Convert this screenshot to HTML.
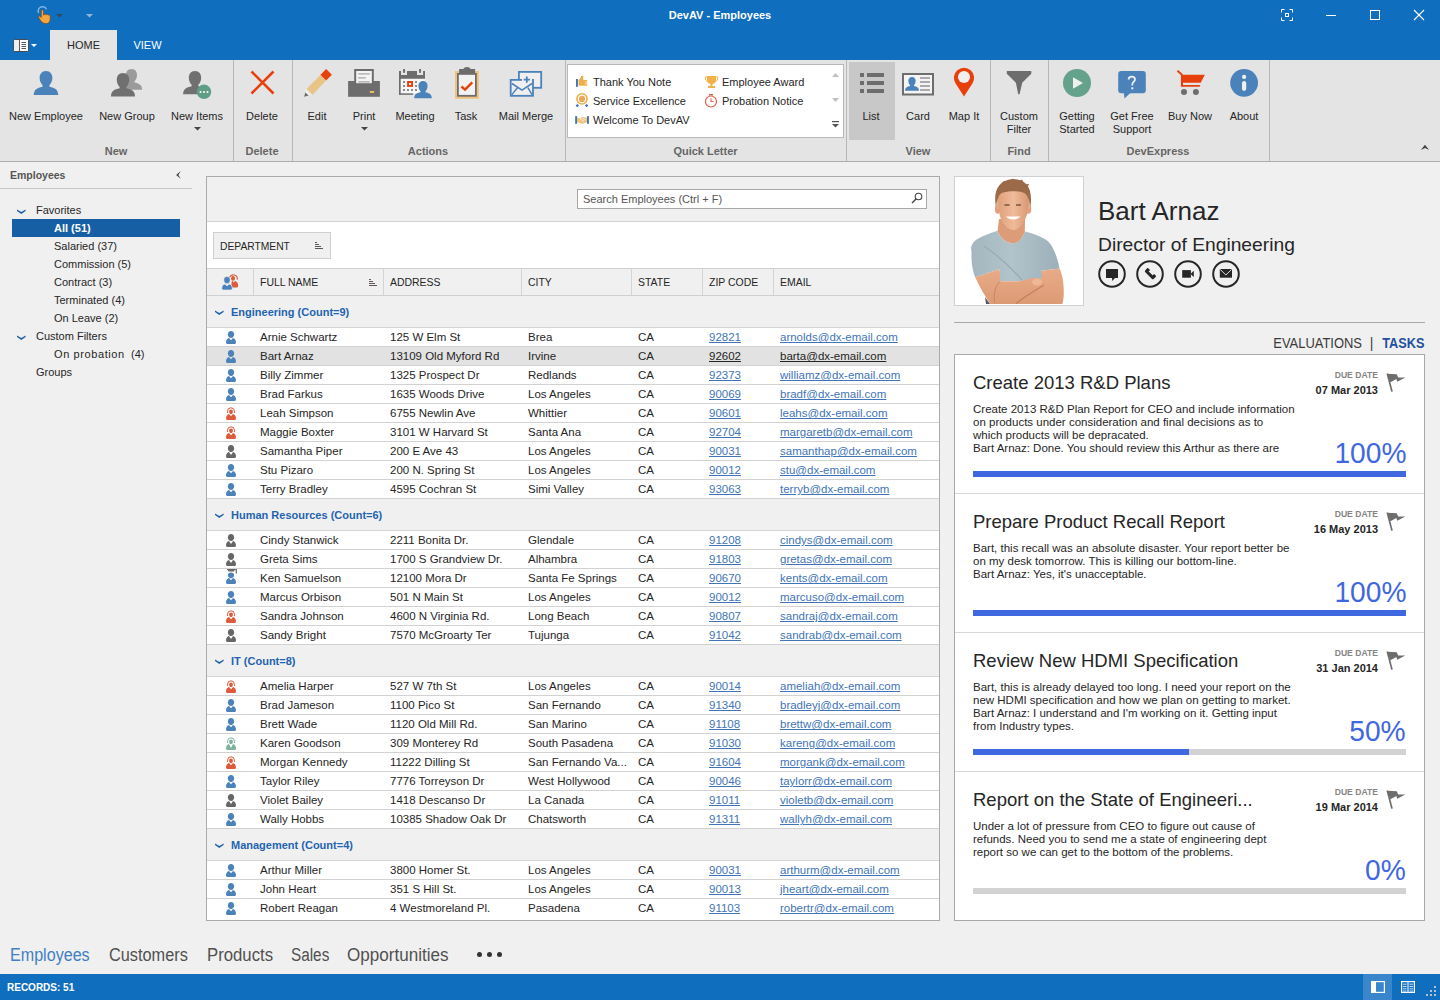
<!DOCTYPE html>
<html><head><meta charset="utf-8">
<style>
*{margin:0;padding:0;box-sizing:border-box}
html,body{width:1440px;height:1000px;overflow:hidden}
body{position:relative;background:#f0f0f0;font-family:"Liberation Sans",sans-serif;color:#252525}
.a{position:absolute}
.t{position:absolute;white-space:nowrap}
svg{overflow:visible}
u{text-decoration:underline}
</style></head><body>

<div class="a" style="left:0px;top:0px;width:1440px;height:60px;background:#106ebe;"></div>
<svg class="a" style="left:36px;top:6px;" width="16" height="18" viewBox="0 0 16 18"><path d="M2.6 7 A4.3 4.3 0 0 1 10.5 3.2" fill="none" stroke="#86b6e6" stroke-width="1.4"/><path d="M5.3 4.8 C5.3 3.6 7.5 3.6 7.5 4.8 L7.5 9.2 L8.3 8.6 C8.9 8.1 9.9 8.2 10.3 8.9 C10.9 8.3 12 8.4 12.4 9.2 C12.9 8.8 14.2 9 14.2 9.9 L14.2 13.2 C14.2 16 12.4 17.6 9.9 17.6 C7.6 17.6 6.1 16.6 4.7 14.6 L2.6 11.6 C2.1 10.6 3.1 9.7 4.1 10.4 L5.3 11.5 Z" fill="#f3a53f" stroke="#7e4b12" stroke-width="0.7"/></svg>
<svg class="a" style="left:56px;top:14px;" width="8" height="5" viewBox="0 0 8 5"><path d="M0 0 L7 0 L3.5 3.5 Z" fill="#2d4d5e"/></svg>
<svg class="a" style="left:86px;top:14px;" width="8" height="5" viewBox="0 0 8 5"><path d="M0 0 L7 0 L3.5 3.5 Z" fill="#8db6df"/></svg>
<div class="t" style="top:8.86px;font-size:11px;color:#fff;line-height:12.65px;font-weight:bold;left:420px;width:600px;text-align:center;">DevAV - Employees</div>
<svg class="a" style="left:1281px;top:9px;" width="12" height="12" viewBox="0 0 12 12"><path d="M0.5 3.5 V0.5 H3.5 M8.5 0.5 H11.5 V3.5 M11.5 8.5 V11.5 H8.5 M3.5 11.5 H0.5 V8.5" fill="none" stroke="#fff" stroke-width="1"/><rect x="4.5" y="4.5" width="3" height="3" fill="none" stroke="#fff" stroke-width="1"/></svg>
<div class="a" style="left:1326px;top:15px;width:10px;height:1px;background:#fff;"></div>
<svg class="a" style="left:1370px;top:10px;" width="10" height="10" viewBox="0 0 10 10"><rect x="0.5" y="0.5" width="9" height="9" fill="none" stroke="#fff" stroke-width="1"/></svg>
<svg class="a" style="left:1414px;top:10px;" width="10" height="10" viewBox="0 0 10 10"><path d="M0 0 L10 10 M10 0 L0 10" stroke="#fff" stroke-width="1.1"/></svg>
<svg class="a" style="left:13px;top:39px;" width="16" height="13" viewBox="0 0 16 13"><rect x="0.5" y="0.5" width="15" height="12" rx="1" fill="#fff" stroke="#333" stroke-width="0.8"/><rect x="1" y="1" width="5" height="11" fill="#eee"/><path d="M6.5 1 V12" stroke="#333" stroke-width="0.8"/><path d="M8.5 3.5 H13 M8.5 5.5 H13 M8.5 7.5 H13 M8.5 9.5 H13" stroke="#444" stroke-width="0.9"/></svg>
<svg class="a" style="left:31px;top:44px;" width="6" height="4" viewBox="0 0 6 4"><path d="M0 0 L6 0 L3 3 Z" fill="#fff"/></svg>
<div class="a" style="left:50px;top:30px;width:67px;height:30px;background:#e4e4e4;"></div>
<div class="t" style="top:38.86px;font-size:11px;color:#262626;line-height:12.65px;left:-216.5px;width:600px;text-align:center;">HOME</div>
<div class="t" style="top:38.86px;font-size:11px;color:#fff;line-height:12.65px;left:-152.5px;width:600px;text-align:center;">VIEW</div>
<div class="a" style="left:0px;top:60px;width:1440px;height:101px;background:#e4e4e4;"></div>
<div class="a" style="left:0px;top:161px;width:1440px;height:1px;background:#acacac;"></div>
<div class="a" style="left:233px;top:60px;width:1px;height:101px;background:#b7b7b7;"></div>
<div class="a" style="left:292px;top:60px;width:1px;height:101px;background:#b7b7b7;"></div>
<div class="a" style="left:565px;top:60px;width:1px;height:101px;background:#b7b7b7;"></div>
<div class="a" style="left:846px;top:60px;width:1px;height:101px;background:#b7b7b7;"></div>
<div class="a" style="left:990px;top:60px;width:1px;height:101px;background:#b7b7b7;"></div>
<div class="a" style="left:1048px;top:60px;width:1px;height:101px;background:#b7b7b7;"></div>
<div class="a" style="left:1269px;top:60px;width:1px;height:101px;background:#b7b7b7;"></div>
<div class="a" style="left:849px;top:62px;width:46px;height:78px;background:#c8c8c8;"></div>
<div class="t" style="top:109.86px;font-size:11px;color:#262626;line-height:12.65px;left:-254px;width:600px;text-align:center;">New Employee</div>
<div class="t" style="top:109.86px;font-size:11px;color:#262626;line-height:12.65px;left:-173px;width:600px;text-align:center;">New Group</div>
<div class="t" style="top:109.86px;font-size:11px;color:#262626;line-height:12.65px;left:-103px;width:600px;text-align:center;">New Items</div>
<svg class="a" style="left:194px;top:127px;" width="7" height="4" viewBox="0 0 7 4"><path d="M0 0 L7 0 L3.5 3.5 Z" fill="#444"/></svg>
<div class="t" style="top:109.86px;font-size:11px;color:#262626;line-height:12.65px;left:-38px;width:600px;text-align:center;">Delete</div>
<div class="t" style="top:109.86px;font-size:11px;color:#262626;line-height:12.65px;left:17px;width:600px;text-align:center;">Edit</div>
<div class="t" style="top:109.86px;font-size:11px;color:#262626;line-height:12.65px;left:64px;width:600px;text-align:center;">Print</div>
<svg class="a" style="left:361px;top:127px;" width="7" height="4" viewBox="0 0 7 4"><path d="M0 0 L7 0 L3.5 3.5 Z" fill="#444"/></svg>
<div class="t" style="top:109.86px;font-size:11px;color:#262626;line-height:12.65px;left:115px;width:600px;text-align:center;">Meeting</div>
<div class="t" style="top:109.86px;font-size:11px;color:#262626;line-height:12.65px;left:166px;width:600px;text-align:center;">Task</div>
<div class="t" style="top:109.86px;font-size:11px;color:#262626;line-height:12.65px;left:226px;width:600px;text-align:center;">Mail Merge</div>
<div class="t" style="top:109.86px;font-size:11px;color:#262626;line-height:12.65px;left:571px;width:600px;text-align:center;">List</div>
<div class="t" style="top:109.86px;font-size:11px;color:#262626;line-height:12.65px;left:618px;width:600px;text-align:center;">Card</div>
<div class="t" style="top:109.86px;font-size:11px;color:#262626;line-height:12.65px;left:664px;width:600px;text-align:center;">Map It</div>
<div class="t" style="top:109.86px;font-size:11px;color:#262626;line-height:12.65px;left:719px;width:600px;text-align:center;">Custom</div>
<div class="t" style="top:122.86px;font-size:11px;color:#262626;line-height:12.65px;left:719px;width:600px;text-align:center;">Filter</div>
<div class="t" style="top:109.86px;font-size:11px;color:#262626;line-height:12.65px;left:777px;width:600px;text-align:center;">Getting</div>
<div class="t" style="top:122.86px;font-size:11px;color:#262626;line-height:12.65px;left:777px;width:600px;text-align:center;">Started</div>
<div class="t" style="top:109.86px;font-size:11px;color:#262626;line-height:12.65px;left:832px;width:600px;text-align:center;">Get Free</div>
<div class="t" style="top:122.86px;font-size:11px;color:#262626;line-height:12.65px;left:832px;width:600px;text-align:center;">Support</div>
<div class="t" style="top:109.86px;font-size:11px;color:#262626;line-height:12.65px;left:890px;width:600px;text-align:center;">Buy Now</div>
<div class="t" style="top:109.86px;font-size:11px;color:#262626;line-height:12.65px;left:944px;width:600px;text-align:center;">About</div>
<div class="t" style="top:144.86px;font-size:11px;color:#666666;line-height:12.65px;font-weight:bold;left:-184px;width:600px;text-align:center;">New</div>
<div class="t" style="top:144.86px;font-size:11px;color:#666666;line-height:12.65px;font-weight:bold;left:-38px;width:600px;text-align:center;">Delete</div>
<div class="t" style="top:144.86px;font-size:11px;color:#666666;line-height:12.65px;font-weight:bold;left:128px;width:600px;text-align:center;">Actions</div>
<div class="t" style="top:144.86px;font-size:11px;color:#666666;line-height:12.65px;font-weight:bold;left:405.5px;width:600px;text-align:center;">Quick Letter</div>
<div class="t" style="top:144.86px;font-size:11px;color:#666666;line-height:12.65px;font-weight:bold;left:618px;width:600px;text-align:center;">View</div>
<div class="t" style="top:144.86px;font-size:11px;color:#666666;line-height:12.65px;font-weight:bold;left:719px;width:600px;text-align:center;">Find</div>
<div class="t" style="top:144.86px;font-size:11px;color:#666666;line-height:12.65px;font-weight:bold;left:858px;width:600px;text-align:center;">DevExpress</div>
<svg class="a" style="left:28px;top:64px;" width="36" height="36" viewBox="0 0 36 36"><g transform="translate(-28,-64)"><path transform="translate(46,71) scale(0.98)" d="M0 0 C4.5 0 6.5 3.5 6.5 7 C6.5 10.5 5 13 3.5 14.5 L3.5 16 C9 17 12.5 19 12.5 24.5 L-12.5 24.5 C-12.5 19 -9 17 -3.5 16 L-3.5 14.5 C-5 13 -6.5 10.5 -6.5 7 C-6.5 3.5 -4.5 0 0 0 Z" fill="#4b82ba"/></g></svg>
<svg class="a" style="left:104px;top:64px;" width="46" height="36" viewBox="0 0 46 36"><g transform="translate(-104,-64)"><path transform="translate(131.5,69) scale(0.85)" d="M0 0 C4.5 0 6.5 3.5 6.5 7 C6.5 10.5 5 13 3.5 14.5 L3.5 16 C9 17 12.5 19 12.5 24.5 L-12.5 24.5 C-12.5 19 -9 17 -3.5 16 L-3.5 14.5 C-5 13 -6.5 10.5 -6.5 7 C-6.5 3.5 -4.5 0 0 0 Z" fill="#9b9b9b"/><path transform="translate(123,73) scale(0.96)" d="M0 0 C4.5 0 6.5 3.5 6.5 7 C6.5 10.5 5 13 3.5 14.5 L3.5 16 C9 17 12.5 19 12.5 24.5 L-12.5 24.5 C-12.5 19 -9 17 -3.5 16 L-3.5 14.5 C-5 13 -6.5 10.5 -6.5 7 C-6.5 3.5 -4.5 0 0 0 Z" fill="#707070"/></g></svg>
<svg class="a" style="left:176px;top:64px;" width="40" height="36" viewBox="0 0 40 36"><g transform="translate(-176,-64)"><path transform="translate(195,71) scale(0.95)" d="M0 0 C4.5 0 6.5 3.5 6.5 7 C6.5 10.5 5 13 3.5 14.5 L3.5 16 C9 17 12.5 19 12.5 24.5 L-12.5 24.5 C-12.5 19 -9 17 -3.5 16 L-3.5 14.5 C-5 13 -6.5 10.5 -6.5 7 C-6.5 3.5 -4.5 0 0 0 Z" fill="#707070"/><circle cx="204" cy="91.8" r="7.2" fill="#5f9e85"/><circle cx="200.5" cy="92" r="1" fill="#fff"/><circle cx="204" cy="92" r="1" fill="#fff"/><circle cx="207.5" cy="92" r="1" fill="#fff"/></g></svg>
<svg class="a" style="left:250px;top:70px;" width="25" height="25" viewBox="0 0 25 25"><path d="M1.5 1.5 L23.5 23.5 M23.5 1.5 L1.5 23.5" stroke="#e8400c" stroke-width="2.6"/></svg>
<svg class="a" style="left:300px;top:64px;" width="36" height="36" viewBox="0 0 36 36"><g transform="translate(-300,-64)"><path d="M326.1 69 L331.9 74.8 L326.1 80.6 L320.3 75.1 Z" fill="#e8400c"/><path d="M320.3 75.1 L326.1 80.6 L312.4 95 L306.6 88.9 Z" fill="#e8c486"/><path d="M306.6 88.9 L312.4 95 L308.7 95.6 L304.1 96.8 L305.3 92.4 Z" fill="#f2f0ea"/><path d="M305.3 92.4 L308.7 95.4 L304.1 96.8 Z" fill="#6d6d6d"/><path d="M307 90.5 L308.5 90.8 L308.8 92.5 L310.3 92.8 L310.6 94.3" fill="none" stroke="#dcdcdc" stroke-width="0.6"/></g></svg>
<svg class="a" style="left:346px;top:64px;" width="36" height="36" viewBox="0 0 36 36"><g transform="translate(-346,-64)"><rect x="348.1" y="81" width="31.8" height="15.8" fill="#6d6d6d"/><rect x="355.2" y="70" width="17.6" height="14.2" fill="#f4f4f4" stroke="#6d6d6d" stroke-width="2"/><path d="M358.2 73.9 H369.8 M358.2 77.9 H365.8 M358.2 81.9 H369.8" stroke="#a6a6a6" stroke-width="1.2"/><rect x="369.8" y="91" width="4.3" height="1.9" fill="#f3bd66"/></g></svg>
<svg class="a" style="left:396px;top:64px;" width="40" height="36" viewBox="0 0 40 36"><g transform="translate(-396,-64)"><rect x="399" y="71" width="1.8" height="23.7" fill="#6d6d6d"/><rect x="399" y="93.2" width="14" height="1.6" fill="#6d6d6d"/><rect x="400.8" y="78.7" width="24" height="14.5" fill="#f6f6f6"/><path d="M399 71.1 H401 V75.1 H407 V71.1 H417 V75.1 H423.1 V71.1 H425 V78.7 H399 Z" fill="#6d6d6d"/><rect x="403.1" y="69" width="1.9" height="3.8" fill="#6d6d6d"/><rect x="419.1" y="69" width="1.9" height="3.8" fill="#6d6d6d"/><g fill="#8c8c8c"><rect x="403" y="81" width="2" height="2"/><rect x="403" y="85" width="2" height="2"/><rect x="403" y="89" width="2" height="2"/><rect x="407" y="89" width="2" height="2"/><rect x="411" y="89" width="2" height="2"/><rect x="415" y="89" width="2" height="2"/><rect x="415" y="81" width="2" height="2"/><rect x="415" y="85" width="2" height="2"/></g><rect x="407.1" y="81" width="5.9" height="5.9" fill="#e8400c"/><rect x="409" y="83" width="2.1" height="1.9" fill="#fff"/><path transform="translate(423,81) scale(0.7)" d="M0 0 C4.5 0 6.5 3.5 6.5 7 C6.5 10.5 5 13 3.5 14.5 L3.5 16 C9 17 12.5 19 12.5 24.5 L-12.5 24.5 C-12.5 19 -9 17 -3.5 16 L-3.5 14.5 C-5 13 -6.5 10.5 -6.5 7 C-6.5 3.5 -4.5 0 0 0 Z" fill="#4b82ba"/></g></svg>
<svg class="a" style="left:452px;top:64px;" width="30" height="36" viewBox="0 0 30 36"><g transform="translate(-452,-64)"><rect x="455" y="71" width="23.9" height="27.8" fill="#efc27f"/><rect x="457.9" y="73.9" width="18" height="21.9" fill="#f2f2f2" stroke="#6d6d6d" stroke-width="1.8"/><path d="M459.1 73.5 V69 H463.3 Q464 66.9 467 66.9 Q470 66.9 470.6 69 H475.1 V73.5 Z" fill="#6d6d6d"/><path d="M461.5 86.5 L465 89.6 L472.3 82.3" fill="none" stroke="#e8400c" stroke-width="2.4"/></g></svg>
<svg class="a" style="left:506px;top:64px;" width="40" height="36" viewBox="0 0 40 36"><g transform="translate(-506,-64)"><rect x="518.9" y="71.9" width="22.3" height="15.9" fill="#efefef" stroke="#4b82ba" stroke-width="1.8"/><rect x="510.7" y="79.9" width="22.3" height="15.9" fill="#efefef" stroke="#4b82ba" stroke-width="1.8"/><rect x="522" y="78" width="10" height="3" fill="#efefef"/><path d="M511.9 83.5 L522 90.1 L532 83.5 M511.9 94.6 L517.4 87.7 M532 94.6 L527.9 87.7" fill="none" stroke="#4b82ba" stroke-width="1.5"/><path d="M526.8 76.5 V82.8 M523.7 79.7 H529.9" stroke="#4b82ba" stroke-width="1.8"/></g></svg>
<svg class="a" style="left:859px;top:72px;" width="26" height="22" viewBox="0 0 26 22"><g fill="#6d6d6d"><rect x="1" y="1" width="4" height="4"/><rect x="8" y="1" width="17" height="4"/><rect x="1" y="9" width="4" height="4"/><rect x="8" y="9" width="17" height="4"/><rect x="1" y="17" width="4" height="4"/><rect x="8" y="17" width="17" height="4"/></g></svg>
<svg class="a" style="left:902px;top:73px;" width="33" height="23" viewBox="0 0 33 23"><rect x="1" y="1" width="30" height="20.5" fill="#f4f4f4" stroke="#6d6d6d" stroke-width="2"/><path transform="translate(10,4) scale(0.56)" d="M0 0 C4.5 0 6.5 3.5 6.5 7 C6.5 10.5 5 13 3.5 14.5 L3.5 16 C9 17 12.5 19 12.5 24.5 L-12.5 24.5 C-12.5 19 -9 17 -3.5 16 L-3.5 14.5 C-5 13 -6.5 10.5 -6.5 7 C-6.5 3.5 -4.5 0 0 0 Z" fill="#4b82ba"/><rect x="0" y="0" width="0" height="0" fill="#4b82ba"/><path d="M18 5 H28 M18 9 H28 M18 13 H28 M18 17 H28" stroke="#aaa" stroke-width="2"/></svg>
<svg class="a" style="left:953px;top:67px;" width="22" height="32" viewBox="0 0 22 32"><path d="M11 29.5 L2.6 16.5 A10.1 10.1 0 1 1 19.4 16.5 Z" fill="#e8400c"/><circle cx="11" cy="10" r="6" fill="#efefef"/></svg>
<svg class="a" style="left:1004px;top:66px;" width="30" height="32" viewBox="0 0 30 32"><g transform="translate(-1004,-66)"><path d="M1006.8 70.9 H1031.3 V73.8 L1022.2 82.8 L1019.6 94.3 H1018.2 L1015.9 82.8 L1006.8 73.8 Z" fill="#6d6d6d"/></g></svg>
<svg class="a" style="left:1063px;top:69px;" width="28" height="28" viewBox="0 0 28 28"><circle cx="14" cy="14" r="14" fill="#64a28b"/><path d="M10 8.2 L20 14 L10 19.8 Z" fill="#f0f0f0"/></svg>
<svg class="a" style="left:1114px;top:66px;" width="36" height="34" viewBox="0 0 36 34"><g transform="translate(-1114,-66)"><rect x="1118.2" y="70.9" width="27.6" height="22.4" rx="3" fill="#4b82ba"/><path d="M1123.8 93 L1124.5 98.5 L1130.3 93 Z" fill="#4b82ba"/><path d="M1128.6 79.4 C1128.6 77.6 1130 76.6 1131.8 76.6 C1133.7 76.6 1135 77.8 1135 79.4 C1135 81.6 1132.3 81.9 1132.3 84.6 V85.6" fill="none" stroke="#f0f0f0" stroke-width="1.7"/><rect x="1131.3" y="87.3" width="2" height="2" fill="#f0f0f0"/></g></svg>
<svg class="a" style="left:1170px;top:64px;" width="40" height="36" viewBox="0 0 40 36"><g transform="translate(-1170,-64)"><path d="M1177.5 70.7 L1182.3 75" fill="none" stroke="#e8400c" stroke-width="1.9"/><path d="M1180.9 74.8 H1204.9 L1200.7 82.8 H1183 V84.9 H1200.5 L1199.5 86.7 H1180.9 Z" fill="#e8400c"/><circle cx="1184" cy="91.9" r="3" fill="#6d6d6d"/><circle cx="1195.9" cy="91.9" r="3" fill="#6d6d6d"/></g></svg>
<svg class="a" style="left:1226px;top:64px;" width="36" height="36" viewBox="0 0 36 36"><g transform="translate(-1226,-64)"><circle cx="1244.1" cy="82.8" r="13.9" fill="#4b82ba"/><circle cx="1244.1" cy="76.9" r="2.1" fill="#f0f0f0"/><rect x="1242" y="81.1" width="4.2" height="9.8" rx="2.1" fill="#f0f0f0"/></g></svg>
<svg class="a" style="left:1416px;top:140px;" width="18" height="14" viewBox="0 0 18 14"><g transform="translate(-1416,-140)"><path d="M1420.8 150 L1425 144.8 L1429.2 150 L1425 147.9 Z" fill="#454545"/></g></svg>
<div class="a" style="left:567px;top:64px;width:277px;height:74px;background:#fff;border:1px solid #b9b9b9"></div>
<div class="t" style="top:75.86px;font-size:11px;color:#262626;line-height:12.65px;left:593px;">Thank You Note</div>
<div class="t" style="top:94.86px;font-size:11px;color:#262626;line-height:12.65px;left:593px;">Service Excellence</div>
<div class="t" style="top:113.86px;font-size:11px;color:#262626;line-height:12.65px;left:593px;">Welcome To DevAV</div>
<div class="t" style="top:75.86px;font-size:11px;color:#262626;line-height:12.65px;left:722px;">Employee Award</div>
<div class="t" style="top:94.86px;font-size:11px;color:#262626;line-height:12.65px;left:722px;">Probation Notice</div>
<svg class="a" style="left:572px;top:72px;" width="20" height="56" viewBox="0 0 20 56"><g transform="translate(-572,-72)"><rect x="576" y="79" width="1.9" height="7.8" fill="#3d74b6"/><path d="M578.5 80.2 L580.8 77.6 L581 75.9 L583.3 75.9 L583.3 80 L587.2 80 L587.2 85.8 L579.5 85.8 Q578.5 85.8 578.5 84.8 Z" fill="#eeae48"/><path d="M585.2 81.9 H587.5 M585.2 83.8 H587.5" stroke="#fff" stroke-width="0.7"/><circle cx="582" cy="98.9" r="5.9" fill="#eeae48"/><circle cx="582" cy="98.9" r="4.3" fill="#fff"/><circle cx="582" cy="98.9" r="3.1" fill="#eda55a"/><path d="M577.3 103.9 L579 105.6 L577.3 107.3 L575.6 105.6 Z M586.6 103.9 L588.3 105.6 L586.6 107.3 L584.9 105.6 Z" fill="#3d74b6"/><rect x="575.2" y="116.2" width="1.9" height="7.6" fill="#3d74b6"/><rect x="587" y="116.2" width="1.9" height="7.6" fill="#3d74b6"/><path d="M577.1 117.5 L580 118.5 L582 116.5 L587 118 L587 122 L582.5 124 L577.1 122 Z" fill="#f0c27a"/><path d="M580 118.6 L584 121.5 M581.5 117.3 L585.5 120" stroke="#fff" stroke-width="0.7" fill="none"/></g></svg>
<svg class="a" style="left:705px;top:75px;" width="13" height="14" viewBox="0 0 13 14"><path d="M2 1 H11 V5 C11 8 9 9 6.5 9 C4 9 2 8 2 5 Z" fill="#f2b24a"/><rect x="5.5" y="9" width="2" height="2" fill="#f2b24a"/><rect x="3" y="11" width="7" height="2" fill="#f2b24a"/><path d="M2 2 H0.5 V4 C0.5 5.5 2 6 2 6 M11 2 H12.5 V4 C12.5 5.5 11 6 11 6" fill="none" stroke="#f2b24a"/></svg>
<svg class="a" style="left:704px;top:93px;" width="14" height="15" viewBox="0 0 14 15"><circle cx="7" cy="8.5" r="5.5" fill="none" stroke="#e06050" stroke-width="1.2"/><path d="M7 5.5 V8.5 H9.5" fill="none" stroke="#e06050" stroke-width="1.1"/><rect x="5" y="1" width="4" height="1.5" fill="#e06050"/></svg>
<svg class="a" style="left:832px;top:72px;" width="8" height="6" viewBox="0 0 8 6"><path d="M0 5 L3.5 1 L7 5 Z" fill="#c0c0c0"/></svg>
<svg class="a" style="left:832px;top:97px;" width="8" height="6" viewBox="0 0 8 6"><path d="M0 1 L3.5 5 L7 1 Z" fill="#c0c0c0"/></svg>
<svg class="a" style="left:832px;top:121px;" width="8" height="7" viewBox="0 0 8 7"><rect x="0" y="0" width="7" height="1.2" fill="#555"/><path d="M0 3 L3.5 6.5 L7 3 Z" fill="#555"/></svg>
<div class="t" style="top:169.32px;font-size:10.5px;color:#555555;line-height:12.07px;font-weight:bold;left:10px;">Employees</div>
<svg class="a" style="left:172px;top:168px;" width="12" height="14" viewBox="0 0 12 14"><g transform="translate(-172,-168)"><path d="M180.7 171 L176.1 174.9 L180.7 178.8 L178.4 174.9 Z" fill="#454545"/></g></svg>
<div class="a" style="left:0px;top:188px;width:192px;height:1px;background:#c8c8c8;"></div>
<svg class="a" style="left:17px;top:209px;" width="9" height="6" viewBox="0 0 9 6"><path d="M0 0.4 L4.3 3 L8.6 0.4 L8.6 1.9 L4.3 4.9 L0 1.9 Z" fill="#1f5fa8"/></svg>
<div class="t" style="top:203.86px;font-size:11px;color:#262626;line-height:12.65px;left:36px;">Favorites</div>
<div class="a" style="left:12px;top:219px;width:168px;height:18px;background:#175fa4;"></div>
<div class="t" style="top:221.86px;font-size:11px;color:#fff;line-height:12.65px;font-weight:bold;left:54px;">All (51)</div>
<div class="t" style="top:239.86px;font-size:11px;color:#262626;line-height:12.65px;left:54px;">Salaried (37)</div>
<div class="t" style="top:257.86px;font-size:11px;color:#262626;line-height:12.65px;left:54px;">Commission (5)</div>
<div class="t" style="top:275.86px;font-size:11px;color:#262626;line-height:12.65px;left:54px;">Contract (3)</div>
<div class="t" style="top:293.86px;font-size:11px;color:#262626;line-height:12.65px;left:54px;">Terminated (4)</div>
<div class="t" style="top:311.86px;font-size:11px;color:#262626;line-height:12.65px;left:54px;">On Leave (2)</div>
<svg class="a" style="left:17px;top:335px;" width="9" height="6" viewBox="0 0 9 6"><path d="M0 0.4 L4.3 3 L8.6 0.4 L8.6 1.9 L4.3 4.9 L0 1.9 Z" fill="#1f5fa8"/></svg>
<div class="t" style="top:329.86px;font-size:11px;color:#262626;line-height:12.65px;left:36px;">Custom Filters</div>
<div class="t" style="top:347.86px;font-size:11px;color:#262626;line-height:12.65px;left:54px;letter-spacing:0.6px;">On probation</div>
<div class="t" style="top:347.86px;font-size:11px;color:#262626;line-height:12.65px;left:131px;">(4)</div>
<div class="t" style="top:365.86px;font-size:11px;color:#262626;line-height:12.65px;left:36px;">Groups</div>
<div class="a" style="left:206px;top:176px;width:734px;height:745px;background:#fff;border:1px solid #aaaaaa"></div>
<div class="a" style="left:207px;top:177px;width:732px;height:44px;background:#f0f0f0;"></div>
<div class="a" style="left:207px;top:221px;width:732px;height:1px;background:#d4d4d4;"></div>
<div class="a" style="left:577px;top:189px;width:350px;height:20px;background:#fff;border:1px solid #a8a8a8"></div>
<div class="t" style="top:192.86px;font-size:11px;color:#555;line-height:12.65px;left:583px;">Search Employees (Ctrl + F)</div>
<svg class="a" style="left:911px;top:192px;" width="12" height="12" viewBox="0 0 12 12"><circle cx="7.5" cy="4.5" r="3.3" fill="none" stroke="#444" stroke-width="1.1"/><path d="M5.2 6.8 L1 11" stroke="#444" stroke-width="1.4"/></svg>
<div class="a" style="left:207px;top:268px;width:732px;height:1px;background:#d0d0d0;"></div>
<div class="a" style="left:213px;top:232px;width:118px;height:27px;background:#f0f0f0;border:1px solid #cfcfcf"></div>
<div class="t" style="top:240.06px;font-size:11px;color:#252525;line-height:12.65px;left:220px;transform:scaleX(0.935);transform-origin:0 50%;">DEPARTMENT</div>
<svg class="a" style="left:314px;top:241px;" width="11" height="10" viewBox="0 0 11 10"><g transform="translate(-314,-241)"><path d="M315 242.5 H317 M315 244.5 H319 M315 246.5 H321 M315 248.5 H323" stroke="#5f5656" stroke-width="1"/></g></svg>
<div class="a" style="left:207px;top:269px;width:732px;height:26px;background:#f0f0f0;"></div>
<div class="a" style="left:207px;top:295px;width:732px;height:1px;background:#d0d0d0;"></div>
<div class="a" style="left:253px;top:269px;width:1px;height:26px;background:#d4d4d4;"></div>
<div class="a" style="left:383px;top:269px;width:1px;height:26px;background:#d4d4d4;"></div>
<div class="a" style="left:521px;top:269px;width:1px;height:26px;background:#d4d4d4;"></div>
<div class="a" style="left:631px;top:269px;width:1px;height:26px;background:#d4d4d4;"></div>
<div class="a" style="left:702px;top:269px;width:1px;height:26px;background:#d4d4d4;"></div>
<div class="a" style="left:773px;top:269px;width:1px;height:26px;background:#d4d4d4;"></div>
<div class="t" style="top:275.86px;font-size:11px;color:#252525;line-height:12.65px;left:260px;transform:scaleX(0.95);transform-origin:0 50%;">FULL NAME</div>
<div class="t" style="top:275.86px;font-size:11px;color:#252525;line-height:12.65px;left:390px;transform:scaleX(0.95);transform-origin:0 50%;">ADDRESS</div>
<div class="t" style="top:275.86px;font-size:11px;color:#252525;line-height:12.65px;left:528px;transform:scaleX(0.95);transform-origin:0 50%;">CITY</div>
<div class="t" style="top:275.86px;font-size:11px;color:#252525;line-height:12.65px;left:638px;transform:scaleX(0.95);transform-origin:0 50%;">STATE</div>
<div class="t" style="top:275.86px;font-size:11px;color:#252525;line-height:12.65px;left:709px;transform:scaleX(0.95);transform-origin:0 50%;">ZIP CODE</div>
<div class="t" style="top:275.86px;font-size:11px;color:#252525;line-height:12.65px;left:780px;transform:scaleX(0.95);transform-origin:0 50%;">EMAIL</div>
<svg class="a" style="left:368px;top:278px;" width="11" height="10" viewBox="0 0 11 10"><g transform="translate(-368,-278)"><path d="M369 279.5 H371 M369 281.5 H373 M369 283.5 H375 M369 285.5 H377" stroke="#5f5656" stroke-width="1"/></g></svg>
<svg class="a" style="left:218px;top:270px;" width="24" height="22" viewBox="0 0 24 22"><g transform="translate(-218,-270)"><path d="M229.6 277.3 A4 4 0 0 1 237.2 279.6" fill="none" stroke="#dd5b3a" stroke-width="1.1"/><ellipse cx="233" cy="278.4" rx="2" ry="2.3" fill="#dd5b3a"/><path d="M231.5 287.5 L231.5 283 C231.5 281.8 232 281.2 232.6 281 L233.8 282.4 L235 281 C236.8 281.3 238.2 283 238.2 285.4 C238.2 287 237.3 287.5 236.3 287.5 Z" fill="#dd5b3a"/><path d="M227 276.6 C229 276.6 230.2 278 230.2 279.9 C230.2 282 228.8 283.7 227 283.7 C225.2 283.7 223.8 282 223.8 279.9 C223.8 278 225 276.6 227 276.6 Z" fill="#4a82be" stroke="#f0f0f0" stroke-width="0.6"/><path d="M221.8 288.6 C221.8 285.8 223 284.4 225 284 L227 286 L229 284 C231 284.4 232.3 285.8 232.3 288.6 Q232.3 290 231 290 L223 290 Q221.8 290 221.8 288.6 Z" fill="#4a82be" stroke="#f0f0f0" stroke-width="0.6"/></g></svg>
<div class="a" style="left:207px;top:296px;width:732px;height:31px;background:#f0f0f0;"></div>
<div class="a" style="left:207px;top:327px;width:732px;height:1px;background:#d4d4d4;"></div>
<svg class="a" style="left:215px;top:310.0px;" width="9" height="6" viewBox="0 0 9 6"><path d="M0 0.4 L4.3 3 L8.6 0.4 L8.6 1.9 L4.3 4.9 L0 1.9 Z" fill="#1f5fa8"/></svg>
<div class="t" style="top:305.86px;font-size:11px;color:#1f64b0;line-height:12.65px;font-weight:bold;left:231px;">Engineering (Count=9)</div>
<div class="a" style="left:207px;top:346px;width:732px;height:1px;background:#d2d2d2;"></div>
<svg class="a" style="left:226px;top:331px;" width="10" height="13" viewBox="0 0 10 13"><path d="M5 0 C7 0 8.1 1.4 8.1 3.2 C8.1 5.3 6.8 6.9 5 6.9 C3.2 6.9 1.9 5.3 1.9 3.2 C1.9 1.4 3 0 5 0 Z" fill="#4b82ba"/><path d="M0 11.6 C0 8.8 1.3 7.4 3 7 L5 9.2 L7 7 C8.7 7.4 10 8.8 10 11.6 Q10 13 8.8 13 L1.2 13 Q0 13 0 11.6 Z" fill="#4b82ba"/></svg>
<div class="t" style="top:331.40px;font-size:11.5px;color:#252525;line-height:13.22px;left:260px;">Arnie Schwartz</div>
<div class="t" style="top:331.40px;font-size:11.5px;color:#252525;line-height:13.22px;left:390px;">125 W Elm St</div>
<div class="t" style="top:331.40px;font-size:11.5px;color:#252525;line-height:13.22px;left:528px;">Brea</div>
<div class="t" style="top:331.40px;font-size:11.5px;color:#252525;line-height:13.22px;left:638px;">CA</div>
<div class="t" style="top:331.40px;font-size:11.5px;color:#4275b8;line-height:13.22px;left:709px;text-decoration:underline;">92821</div>
<div class="t" style="top:331.40px;font-size:11.5px;color:#4275b8;line-height:13.22px;left:780px;text-decoration:underline;">arnolds@dx-email.com</div>
<div class="a" style="left:207px;top:347px;width:732px;height:18px;background:#e2e2e2;"></div>
<div class="a" style="left:207px;top:365px;width:732px;height:1px;background:#d2d2d2;"></div>
<svg class="a" style="left:226px;top:350px;" width="10" height="13" viewBox="0 0 10 13"><path d="M5 0 C7 0 8.1 1.4 8.1 3.2 C8.1 5.3 6.8 6.9 5 6.9 C3.2 6.9 1.9 5.3 1.9 3.2 C1.9 1.4 3 0 5 0 Z" fill="#4b82ba"/><path d="M0 11.6 C0 8.8 1.3 7.4 3 7 L5 9.2 L7 7 C8.7 7.4 10 8.8 10 11.6 Q10 13 8.8 13 L1.2 13 Q0 13 0 11.6 Z" fill="#4b82ba"/></svg>
<div class="t" style="top:350.40px;font-size:11.5px;color:#252525;line-height:13.22px;left:260px;">Bart Arnaz</div>
<div class="t" style="top:350.40px;font-size:11.5px;color:#252525;line-height:13.22px;left:390px;">13109 Old Myford Rd</div>
<div class="t" style="top:350.40px;font-size:11.5px;color:#252525;line-height:13.22px;left:528px;">Irvine</div>
<div class="t" style="top:350.40px;font-size:11.5px;color:#252525;line-height:13.22px;left:638px;">CA</div>
<div class="t" style="top:350.40px;font-size:11.5px;color:#252525;line-height:13.22px;left:709px;text-decoration:underline;">92602</div>
<div class="t" style="top:350.40px;font-size:11.5px;color:#252525;line-height:13.22px;left:780px;text-decoration:underline;">barta@dx-email.com</div>
<div class="a" style="left:207px;top:384px;width:732px;height:1px;background:#d2d2d2;"></div>
<svg class="a" style="left:226px;top:369px;" width="10" height="13" viewBox="0 0 10 13"><path d="M5 0 C7 0 8.1 1.4 8.1 3.2 C8.1 5.3 6.8 6.9 5 6.9 C3.2 6.9 1.9 5.3 1.9 3.2 C1.9 1.4 3 0 5 0 Z" fill="#4b82ba"/><path d="M0 11.6 C0 8.8 1.3 7.4 3 7 L5 9.2 L7 7 C8.7 7.4 10 8.8 10 11.6 Q10 13 8.8 13 L1.2 13 Q0 13 0 11.6 Z" fill="#4b82ba"/></svg>
<div class="t" style="top:369.40px;font-size:11.5px;color:#252525;line-height:13.22px;left:260px;">Billy Zimmer</div>
<div class="t" style="top:369.40px;font-size:11.5px;color:#252525;line-height:13.22px;left:390px;">1325 Prospect Dr</div>
<div class="t" style="top:369.40px;font-size:11.5px;color:#252525;line-height:13.22px;left:528px;">Redlands</div>
<div class="t" style="top:369.40px;font-size:11.5px;color:#252525;line-height:13.22px;left:638px;">CA</div>
<div class="t" style="top:369.40px;font-size:11.5px;color:#4275b8;line-height:13.22px;left:709px;text-decoration:underline;">92373</div>
<div class="t" style="top:369.40px;font-size:11.5px;color:#4275b8;line-height:13.22px;left:780px;text-decoration:underline;">williamz@dx-email.com</div>
<div class="a" style="left:207px;top:403px;width:732px;height:1px;background:#d2d2d2;"></div>
<svg class="a" style="left:226px;top:388px;" width="10" height="13" viewBox="0 0 10 13"><path d="M5 0 C7 0 8.1 1.4 8.1 3.2 C8.1 5.3 6.8 6.9 5 6.9 C3.2 6.9 1.9 5.3 1.9 3.2 C1.9 1.4 3 0 5 0 Z" fill="#4b82ba"/><path d="M0 11.6 C0 8.8 1.3 7.4 3 7 L5 9.2 L7 7 C8.7 7.4 10 8.8 10 11.6 Q10 13 8.8 13 L1.2 13 Q0 13 0 11.6 Z" fill="#4b82ba"/></svg>
<div class="t" style="top:388.40px;font-size:11.5px;color:#252525;line-height:13.22px;left:260px;">Brad Farkus</div>
<div class="t" style="top:388.40px;font-size:11.5px;color:#252525;line-height:13.22px;left:390px;">1635 Woods Drive</div>
<div class="t" style="top:388.40px;font-size:11.5px;color:#252525;line-height:13.22px;left:528px;">Los Angeles</div>
<div class="t" style="top:388.40px;font-size:11.5px;color:#252525;line-height:13.22px;left:638px;">CA</div>
<div class="t" style="top:388.40px;font-size:11.5px;color:#4275b8;line-height:13.22px;left:709px;text-decoration:underline;">90069</div>
<div class="t" style="top:388.40px;font-size:11.5px;color:#4275b8;line-height:13.22px;left:780px;text-decoration:underline;">bradf@dx-email.com</div>
<div class="a" style="left:207px;top:422px;width:732px;height:1px;background:#d2d2d2;"></div>
<svg class="a" style="left:226px;top:407px;" width="10" height="13" viewBox="0 0 10 13"><path d="M1.6 6 V4.2 A3.4 3.4 0 0 1 8.4 4.2 V6" fill="none" stroke="#dd5b3a" stroke-width="1"/><ellipse cx="5" cy="4.8" rx="1.9" ry="2.4" fill="#dd5b3a"/><path d="M0 11.6 C0 8.8 1.3 7.4 3 7 L5 9.2 L7 7 C8.7 7.4 10 8.8 10 11.6 Q10 13 8.8 13 L1.2 13 Q0 13 0 11.6 Z" fill="#dd5b3a"/></svg>
<div class="t" style="top:407.40px;font-size:11.5px;color:#252525;line-height:13.22px;left:260px;">Leah Simpson</div>
<div class="t" style="top:407.40px;font-size:11.5px;color:#252525;line-height:13.22px;left:390px;">6755 Newlin Ave</div>
<div class="t" style="top:407.40px;font-size:11.5px;color:#252525;line-height:13.22px;left:528px;">Whittier</div>
<div class="t" style="top:407.40px;font-size:11.5px;color:#252525;line-height:13.22px;left:638px;">CA</div>
<div class="t" style="top:407.40px;font-size:11.5px;color:#4275b8;line-height:13.22px;left:709px;text-decoration:underline;">90601</div>
<div class="t" style="top:407.40px;font-size:11.5px;color:#4275b8;line-height:13.22px;left:780px;text-decoration:underline;">leahs@dx-email.com</div>
<div class="a" style="left:207px;top:441px;width:732px;height:1px;background:#d2d2d2;"></div>
<svg class="a" style="left:226px;top:426px;" width="10" height="13" viewBox="0 0 10 13"><path d="M1.6 6 V4.2 A3.4 3.4 0 0 1 8.4 4.2 V6" fill="none" stroke="#dd5b3a" stroke-width="1"/><ellipse cx="5" cy="4.8" rx="1.9" ry="2.4" fill="#dd5b3a"/><path d="M0 11.6 C0 8.8 1.3 7.4 3 7 L5 9.2 L7 7 C8.7 7.4 10 8.8 10 11.6 Q10 13 8.8 13 L1.2 13 Q0 13 0 11.6 Z" fill="#dd5b3a"/></svg>
<div class="t" style="top:426.40px;font-size:11.5px;color:#252525;line-height:13.22px;left:260px;">Maggie Boxter</div>
<div class="t" style="top:426.40px;font-size:11.5px;color:#252525;line-height:13.22px;left:390px;">3101 W Harvard St</div>
<div class="t" style="top:426.40px;font-size:11.5px;color:#252525;line-height:13.22px;left:528px;">Santa Ana</div>
<div class="t" style="top:426.40px;font-size:11.5px;color:#252525;line-height:13.22px;left:638px;">CA</div>
<div class="t" style="top:426.40px;font-size:11.5px;color:#4275b8;line-height:13.22px;left:709px;text-decoration:underline;">92704</div>
<div class="t" style="top:426.40px;font-size:11.5px;color:#4275b8;line-height:13.22px;left:780px;text-decoration:underline;">margaretb@dx-email.com</div>
<div class="a" style="left:207px;top:460px;width:732px;height:1px;background:#d2d2d2;"></div>
<svg class="a" style="left:226px;top:445px;" width="10" height="13" viewBox="0 0 10 13"><path d="M5 0 C7 0 8.1 1.4 8.1 3.2 C8.1 5.3 6.8 6.9 5 6.9 C3.2 6.9 1.9 5.3 1.9 3.2 C1.9 1.4 3 0 5 0 Z" fill="#666666"/><path d="M0 11.6 C0 8.8 1.3 7.4 3 7 L5 10 L7 7 C8.7 7.4 10 8.8 10 11.6 Q10 13 8.8 13 L1.2 13 Q0 13 0 11.6 Z" fill="#666666"/></svg>
<div class="t" style="top:445.40px;font-size:11.5px;color:#252525;line-height:13.22px;left:260px;">Samantha Piper</div>
<div class="t" style="top:445.40px;font-size:11.5px;color:#252525;line-height:13.22px;left:390px;">200 E Ave 43</div>
<div class="t" style="top:445.40px;font-size:11.5px;color:#252525;line-height:13.22px;left:528px;">Los Angeles</div>
<div class="t" style="top:445.40px;font-size:11.5px;color:#252525;line-height:13.22px;left:638px;">CA</div>
<div class="t" style="top:445.40px;font-size:11.5px;color:#4275b8;line-height:13.22px;left:709px;text-decoration:underline;">90031</div>
<div class="t" style="top:445.40px;font-size:11.5px;color:#4275b8;line-height:13.22px;left:780px;text-decoration:underline;">samanthap@dx-email.com</div>
<div class="a" style="left:207px;top:479px;width:732px;height:1px;background:#d2d2d2;"></div>
<svg class="a" style="left:226px;top:464px;" width="10" height="13" viewBox="0 0 10 13"><path d="M5 0 C7 0 8.1 1.4 8.1 3.2 C8.1 5.3 6.8 6.9 5 6.9 C3.2 6.9 1.9 5.3 1.9 3.2 C1.9 1.4 3 0 5 0 Z" fill="#4b82ba"/><path d="M0 11.6 C0 8.8 1.3 7.4 3 7 L5 9.2 L7 7 C8.7 7.4 10 8.8 10 11.6 Q10 13 8.8 13 L1.2 13 Q0 13 0 11.6 Z" fill="#4b82ba"/></svg>
<div class="t" style="top:464.40px;font-size:11.5px;color:#252525;line-height:13.22px;left:260px;">Stu Pizaro</div>
<div class="t" style="top:464.40px;font-size:11.5px;color:#252525;line-height:13.22px;left:390px;">200 N. Spring St</div>
<div class="t" style="top:464.40px;font-size:11.5px;color:#252525;line-height:13.22px;left:528px;">Los Angeles</div>
<div class="t" style="top:464.40px;font-size:11.5px;color:#252525;line-height:13.22px;left:638px;">CA</div>
<div class="t" style="top:464.40px;font-size:11.5px;color:#4275b8;line-height:13.22px;left:709px;text-decoration:underline;">90012</div>
<div class="t" style="top:464.40px;font-size:11.5px;color:#4275b8;line-height:13.22px;left:780px;text-decoration:underline;">stu@dx-email.com</div>
<div class="a" style="left:207px;top:498px;width:732px;height:1px;background:#d2d2d2;"></div>
<svg class="a" style="left:226px;top:483px;" width="10" height="13" viewBox="0 0 10 13"><path d="M5 0 C7 0 8.1 1.4 8.1 3.2 C8.1 5.3 6.8 6.9 5 6.9 C3.2 6.9 1.9 5.3 1.9 3.2 C1.9 1.4 3 0 5 0 Z" fill="#4b82ba"/><path d="M0 11.6 C0 8.8 1.3 7.4 3 7 L5 9.2 L7 7 C8.7 7.4 10 8.8 10 11.6 Q10 13 8.8 13 L1.2 13 Q0 13 0 11.6 Z" fill="#4b82ba"/></svg>
<div class="t" style="top:483.40px;font-size:11.5px;color:#252525;line-height:13.22px;left:260px;">Terry Bradley</div>
<div class="t" style="top:483.40px;font-size:11.5px;color:#252525;line-height:13.22px;left:390px;">4595 Cochran St</div>
<div class="t" style="top:483.40px;font-size:11.5px;color:#252525;line-height:13.22px;left:528px;">Simi Valley</div>
<div class="t" style="top:483.40px;font-size:11.5px;color:#252525;line-height:13.22px;left:638px;">CA</div>
<div class="t" style="top:483.40px;font-size:11.5px;color:#4275b8;line-height:13.22px;left:709px;text-decoration:underline;">93063</div>
<div class="t" style="top:483.40px;font-size:11.5px;color:#4275b8;line-height:13.22px;left:780px;text-decoration:underline;">terryb@dx-email.com</div>
<div class="a" style="left:207px;top:499px;width:732px;height:31px;background:#f0f0f0;"></div>
<div class="a" style="left:207px;top:530px;width:732px;height:1px;background:#d4d4d4;"></div>
<svg class="a" style="left:215px;top:513.0px;" width="9" height="6" viewBox="0 0 9 6"><path d="M0 0.4 L4.3 3 L8.6 0.4 L8.6 1.9 L4.3 4.9 L0 1.9 Z" fill="#1f5fa8"/></svg>
<div class="t" style="top:508.86px;font-size:11px;color:#1f64b0;line-height:12.65px;font-weight:bold;left:231px;">Human Resources (Count=6)</div>
<div class="a" style="left:207px;top:549px;width:732px;height:1px;background:#d2d2d2;"></div>
<svg class="a" style="left:226px;top:534px;" width="10" height="13" viewBox="0 0 10 13"><path d="M5 0 C7 0 8.1 1.4 8.1 3.2 C8.1 5.3 6.8 6.9 5 6.9 C3.2 6.9 1.9 5.3 1.9 3.2 C1.9 1.4 3 0 5 0 Z" fill="#666666"/><path d="M0 11.6 C0 8.8 1.3 7.4 3 7 L5 10 L7 7 C8.7 7.4 10 8.8 10 11.6 Q10 13 8.8 13 L1.2 13 Q0 13 0 11.6 Z" fill="#666666"/></svg>
<div class="t" style="top:534.40px;font-size:11.5px;color:#252525;line-height:13.22px;left:260px;">Cindy Stanwick</div>
<div class="t" style="top:534.40px;font-size:11.5px;color:#252525;line-height:13.22px;left:390px;">2211 Bonita Dr.</div>
<div class="t" style="top:534.40px;font-size:11.5px;color:#252525;line-height:13.22px;left:528px;">Glendale</div>
<div class="t" style="top:534.40px;font-size:11.5px;color:#252525;line-height:13.22px;left:638px;">CA</div>
<div class="t" style="top:534.40px;font-size:11.5px;color:#4275b8;line-height:13.22px;left:709px;text-decoration:underline;">91208</div>
<div class="t" style="top:534.40px;font-size:11.5px;color:#4275b8;line-height:13.22px;left:780px;text-decoration:underline;">cindys@dx-email.com</div>
<div class="a" style="left:207px;top:568px;width:732px;height:1px;background:#d2d2d2;"></div>
<svg class="a" style="left:226px;top:553px;" width="10" height="13" viewBox="0 0 10 13"><path d="M5 0 C7 0 8.1 1.4 8.1 3.2 C8.1 5.3 6.8 6.9 5 6.9 C3.2 6.9 1.9 5.3 1.9 3.2 C1.9 1.4 3 0 5 0 Z" fill="#666666"/><path d="M0 11.6 C0 8.8 1.3 7.4 3 7 L5 10 L7 7 C8.7 7.4 10 8.8 10 11.6 Q10 13 8.8 13 L1.2 13 Q0 13 0 11.6 Z" fill="#666666"/></svg>
<div class="t" style="top:553.40px;font-size:11.5px;color:#252525;line-height:13.22px;left:260px;">Greta Sims</div>
<div class="t" style="top:553.40px;font-size:11.5px;color:#252525;line-height:13.22px;left:390px;">1700 S Grandview Dr.</div>
<div class="t" style="top:553.40px;font-size:11.5px;color:#252525;line-height:13.22px;left:528px;">Alhambra</div>
<div class="t" style="top:553.40px;font-size:11.5px;color:#252525;line-height:13.22px;left:638px;">CA</div>
<div class="t" style="top:553.40px;font-size:11.5px;color:#4275b8;line-height:13.22px;left:709px;text-decoration:underline;">91803</div>
<div class="t" style="top:553.40px;font-size:11.5px;color:#4275b8;line-height:13.22px;left:780px;text-decoration:underline;">gretas@dx-email.com</div>
<div class="a" style="left:207px;top:587px;width:732px;height:1px;background:#d2d2d2;"></div>
<svg class="a" style="left:226px;top:572px;" width="10" height="13" viewBox="0 0 10 13"><path d="M1 -2.5 H10.3 V1.5" fill="none" stroke="#6a6a6a" stroke-width="1.2"/><path d="M1.5 -2.5 H9 L8 -0.6 H2.5 Z" fill="#6a6a6a"/><path d="M5 0.4 C7 0.4 8.1 1.4 8.1 3 C8.1 4.8 6.8 6.3 5 6.3 C3.2 6.3 1.9 4.8 1.9 3 C1.9 1.4 3 0.4 5 0.4 Z" fill="#4b82ba"/><path d="M0 10.6 C0 7.8 1.3 6.4 3 6 L5 8.2 L7 6 C8.7 6.4 10 7.8 10 10.6 Q10 12 8.8 12 L1.2 12 Q0 12 0 10.6 Z" fill="#4b82ba"/></svg>
<div class="t" style="top:572.40px;font-size:11.5px;color:#252525;line-height:13.22px;left:260px;">Ken Samuelson</div>
<div class="t" style="top:572.40px;font-size:11.5px;color:#252525;line-height:13.22px;left:390px;">12100 Mora Dr</div>
<div class="t" style="top:572.40px;font-size:11.5px;color:#252525;line-height:13.22px;left:528px;">Santa Fe Springs</div>
<div class="t" style="top:572.40px;font-size:11.5px;color:#252525;line-height:13.22px;left:638px;">CA</div>
<div class="t" style="top:572.40px;font-size:11.5px;color:#4275b8;line-height:13.22px;left:709px;text-decoration:underline;">90670</div>
<div class="t" style="top:572.40px;font-size:11.5px;color:#4275b8;line-height:13.22px;left:780px;text-decoration:underline;">kents@dx-email.com</div>
<div class="a" style="left:207px;top:606px;width:732px;height:1px;background:#d2d2d2;"></div>
<svg class="a" style="left:226px;top:591px;" width="10" height="13" viewBox="0 0 10 13"><path d="M5 0 C7 0 8.1 1.4 8.1 3.2 C8.1 5.3 6.8 6.9 5 6.9 C3.2 6.9 1.9 5.3 1.9 3.2 C1.9 1.4 3 0 5 0 Z" fill="#4b82ba"/><path d="M0 11.6 C0 8.8 1.3 7.4 3 7 L5 9.2 L7 7 C8.7 7.4 10 8.8 10 11.6 Q10 13 8.8 13 L1.2 13 Q0 13 0 11.6 Z" fill="#4b82ba"/></svg>
<div class="t" style="top:591.40px;font-size:11.5px;color:#252525;line-height:13.22px;left:260px;">Marcus Orbison</div>
<div class="t" style="top:591.40px;font-size:11.5px;color:#252525;line-height:13.22px;left:390px;">501 N Main St</div>
<div class="t" style="top:591.40px;font-size:11.5px;color:#252525;line-height:13.22px;left:528px;">Los Angeles</div>
<div class="t" style="top:591.40px;font-size:11.5px;color:#252525;line-height:13.22px;left:638px;">CA</div>
<div class="t" style="top:591.40px;font-size:11.5px;color:#4275b8;line-height:13.22px;left:709px;text-decoration:underline;">90012</div>
<div class="t" style="top:591.40px;font-size:11.5px;color:#4275b8;line-height:13.22px;left:780px;text-decoration:underline;">marcuso@dx-email.com</div>
<div class="a" style="left:207px;top:625px;width:732px;height:1px;background:#d2d2d2;"></div>
<svg class="a" style="left:226px;top:610px;" width="10" height="13" viewBox="0 0 10 13"><path d="M1.6 6 V4.2 A3.4 3.4 0 0 1 8.4 4.2 V6" fill="none" stroke="#dd5b3a" stroke-width="1"/><ellipse cx="5" cy="4.8" rx="1.9" ry="2.4" fill="#dd5b3a"/><path d="M0 11.6 C0 8.8 1.3 7.4 3 7 L5 9.2 L7 7 C8.7 7.4 10 8.8 10 11.6 Q10 13 8.8 13 L1.2 13 Q0 13 0 11.6 Z" fill="#dd5b3a"/></svg>
<div class="t" style="top:610.40px;font-size:11.5px;color:#252525;line-height:13.22px;left:260px;">Sandra Johnson</div>
<div class="t" style="top:610.40px;font-size:11.5px;color:#252525;line-height:13.22px;left:390px;">4600 N Virginia Rd.</div>
<div class="t" style="top:610.40px;font-size:11.5px;color:#252525;line-height:13.22px;left:528px;">Long Beach</div>
<div class="t" style="top:610.40px;font-size:11.5px;color:#252525;line-height:13.22px;left:638px;">CA</div>
<div class="t" style="top:610.40px;font-size:11.5px;color:#4275b8;line-height:13.22px;left:709px;text-decoration:underline;">90807</div>
<div class="t" style="top:610.40px;font-size:11.5px;color:#4275b8;line-height:13.22px;left:780px;text-decoration:underline;">sandraj@dx-email.com</div>
<div class="a" style="left:207px;top:644px;width:732px;height:1px;background:#d2d2d2;"></div>
<svg class="a" style="left:226px;top:629px;" width="10" height="13" viewBox="0 0 10 13"><path d="M5 0 C7 0 8.1 1.4 8.1 3.2 C8.1 5.3 6.8 6.9 5 6.9 C3.2 6.9 1.9 5.3 1.9 3.2 C1.9 1.4 3 0 5 0 Z" fill="#666666"/><path d="M0 11.6 C0 8.8 1.3 7.4 3 7 L5 10 L7 7 C8.7 7.4 10 8.8 10 11.6 Q10 13 8.8 13 L1.2 13 Q0 13 0 11.6 Z" fill="#666666"/></svg>
<div class="t" style="top:629.40px;font-size:11.5px;color:#252525;line-height:13.22px;left:260px;">Sandy Bright</div>
<div class="t" style="top:629.40px;font-size:11.5px;color:#252525;line-height:13.22px;left:390px;">7570 McGroarty Ter</div>
<div class="t" style="top:629.40px;font-size:11.5px;color:#252525;line-height:13.22px;left:528px;">Tujunga</div>
<div class="t" style="top:629.40px;font-size:11.5px;color:#252525;line-height:13.22px;left:638px;">CA</div>
<div class="t" style="top:629.40px;font-size:11.5px;color:#4275b8;line-height:13.22px;left:709px;text-decoration:underline;">91042</div>
<div class="t" style="top:629.40px;font-size:11.5px;color:#4275b8;line-height:13.22px;left:780px;text-decoration:underline;">sandrab@dx-email.com</div>
<div class="a" style="left:207px;top:645px;width:732px;height:31px;background:#f0f0f0;"></div>
<div class="a" style="left:207px;top:676px;width:732px;height:1px;background:#d4d4d4;"></div>
<svg class="a" style="left:215px;top:659.0px;" width="9" height="6" viewBox="0 0 9 6"><path d="M0 0.4 L4.3 3 L8.6 0.4 L8.6 1.9 L4.3 4.9 L0 1.9 Z" fill="#1f5fa8"/></svg>
<div class="t" style="top:654.86px;font-size:11px;color:#1f64b0;line-height:12.65px;font-weight:bold;left:231px;">IT (Count=8)</div>
<div class="a" style="left:207px;top:695px;width:732px;height:1px;background:#d2d2d2;"></div>
<svg class="a" style="left:226px;top:680px;" width="10" height="13" viewBox="0 0 10 13"><path d="M1.6 6 V4.2 A3.4 3.4 0 0 1 8.4 4.2 V6" fill="none" stroke="#dd5b3a" stroke-width="1"/><ellipse cx="5" cy="4.8" rx="1.9" ry="2.4" fill="#dd5b3a"/><path d="M0 11.6 C0 8.8 1.3 7.4 3 7 L5 9.2 L7 7 C8.7 7.4 10 8.8 10 11.6 Q10 13 8.8 13 L1.2 13 Q0 13 0 11.6 Z" fill="#dd5b3a"/></svg>
<div class="t" style="top:680.40px;font-size:11.5px;color:#252525;line-height:13.22px;left:260px;">Amelia Harper</div>
<div class="t" style="top:680.40px;font-size:11.5px;color:#252525;line-height:13.22px;left:390px;">527 W 7th St</div>
<div class="t" style="top:680.40px;font-size:11.5px;color:#252525;line-height:13.22px;left:528px;">Los Angeles</div>
<div class="t" style="top:680.40px;font-size:11.5px;color:#252525;line-height:13.22px;left:638px;">CA</div>
<div class="t" style="top:680.40px;font-size:11.5px;color:#4275b8;line-height:13.22px;left:709px;text-decoration:underline;">90014</div>
<div class="t" style="top:680.40px;font-size:11.5px;color:#4275b8;line-height:13.22px;left:780px;text-decoration:underline;">ameliah@dx-email.com</div>
<div class="a" style="left:207px;top:714px;width:732px;height:1px;background:#d2d2d2;"></div>
<svg class="a" style="left:226px;top:699px;" width="10" height="13" viewBox="0 0 10 13"><path d="M5 0 C7 0 8.1 1.4 8.1 3.2 C8.1 5.3 6.8 6.9 5 6.9 C3.2 6.9 1.9 5.3 1.9 3.2 C1.9 1.4 3 0 5 0 Z" fill="#4b82ba"/><path d="M0 11.6 C0 8.8 1.3 7.4 3 7 L5 9.2 L7 7 C8.7 7.4 10 8.8 10 11.6 Q10 13 8.8 13 L1.2 13 Q0 13 0 11.6 Z" fill="#4b82ba"/></svg>
<div class="t" style="top:699.40px;font-size:11.5px;color:#252525;line-height:13.22px;left:260px;">Brad Jameson</div>
<div class="t" style="top:699.40px;font-size:11.5px;color:#252525;line-height:13.22px;left:390px;">1100 Pico St</div>
<div class="t" style="top:699.40px;font-size:11.5px;color:#252525;line-height:13.22px;left:528px;">San Fernando</div>
<div class="t" style="top:699.40px;font-size:11.5px;color:#252525;line-height:13.22px;left:638px;">CA</div>
<div class="t" style="top:699.40px;font-size:11.5px;color:#4275b8;line-height:13.22px;left:709px;text-decoration:underline;">91340</div>
<div class="t" style="top:699.40px;font-size:11.5px;color:#4275b8;line-height:13.22px;left:780px;text-decoration:underline;">bradleyj@dx-email.com</div>
<div class="a" style="left:207px;top:733px;width:732px;height:1px;background:#d2d2d2;"></div>
<svg class="a" style="left:226px;top:718px;" width="10" height="13" viewBox="0 0 10 13"><path d="M5 0 C7 0 8.1 1.4 8.1 3.2 C8.1 5.3 6.8 6.9 5 6.9 C3.2 6.9 1.9 5.3 1.9 3.2 C1.9 1.4 3 0 5 0 Z" fill="#4b82ba"/><path d="M0 11.6 C0 8.8 1.3 7.4 3 7 L5 9.2 L7 7 C8.7 7.4 10 8.8 10 11.6 Q10 13 8.8 13 L1.2 13 Q0 13 0 11.6 Z" fill="#4b82ba"/></svg>
<div class="t" style="top:718.40px;font-size:11.5px;color:#252525;line-height:13.22px;left:260px;">Brett Wade</div>
<div class="t" style="top:718.40px;font-size:11.5px;color:#252525;line-height:13.22px;left:390px;">1120 Old Mill Rd.</div>
<div class="t" style="top:718.40px;font-size:11.5px;color:#252525;line-height:13.22px;left:528px;">San Marino</div>
<div class="t" style="top:718.40px;font-size:11.5px;color:#252525;line-height:13.22px;left:638px;">CA</div>
<div class="t" style="top:718.40px;font-size:11.5px;color:#4275b8;line-height:13.22px;left:709px;text-decoration:underline;">91108</div>
<div class="t" style="top:718.40px;font-size:11.5px;color:#4275b8;line-height:13.22px;left:780px;text-decoration:underline;">brettw@dx-email.com</div>
<div class="a" style="left:207px;top:752px;width:732px;height:1px;background:#d2d2d2;"></div>
<svg class="a" style="left:226px;top:737px;" width="10" height="13" viewBox="0 0 10 13"><path d="M1.6 6 V4.2 A3.4 3.4 0 0 1 8.4 4.2 V6" fill="none" stroke="#7db29d" stroke-width="1"/><ellipse cx="5" cy="4.8" rx="1.9" ry="2.4" fill="#7db29d"/><path d="M0 11.6 C0 8.8 1.3 7.4 3 7 L5 11 L7 7 C8.7 7.4 10 8.8 10 11.6 Q10 13 8.8 13 L1.2 13 Q0 13 0 11.6 Z" fill="#7db29d"/></svg>
<div class="t" style="top:737.40px;font-size:11.5px;color:#252525;line-height:13.22px;left:260px;">Karen Goodson</div>
<div class="t" style="top:737.40px;font-size:11.5px;color:#252525;line-height:13.22px;left:390px;">309 Monterey Rd</div>
<div class="t" style="top:737.40px;font-size:11.5px;color:#252525;line-height:13.22px;left:528px;">South Pasadena</div>
<div class="t" style="top:737.40px;font-size:11.5px;color:#252525;line-height:13.22px;left:638px;">CA</div>
<div class="t" style="top:737.40px;font-size:11.5px;color:#4275b8;line-height:13.22px;left:709px;text-decoration:underline;">91030</div>
<div class="t" style="top:737.40px;font-size:11.5px;color:#4275b8;line-height:13.22px;left:780px;text-decoration:underline;">kareng@dx-email.com</div>
<div class="a" style="left:207px;top:771px;width:732px;height:1px;background:#d2d2d2;"></div>
<svg class="a" style="left:226px;top:756px;" width="10" height="13" viewBox="0 0 10 13"><path d="M1.6 6 V4.2 A3.4 3.4 0 0 1 8.4 4.2 V6" fill="none" stroke="#dd5b3a" stroke-width="1"/><ellipse cx="5" cy="4.8" rx="1.9" ry="2.4" fill="#dd5b3a"/><path d="M0 11.6 C0 8.8 1.3 7.4 3 7 L5 9.2 L7 7 C8.7 7.4 10 8.8 10 11.6 Q10 13 8.8 13 L1.2 13 Q0 13 0 11.6 Z" fill="#dd5b3a"/></svg>
<div class="t" style="top:756.40px;font-size:11.5px;color:#252525;line-height:13.22px;left:260px;">Morgan Kennedy</div>
<div class="t" style="top:756.40px;font-size:11.5px;color:#252525;line-height:13.22px;left:390px;">11222 Dilling St</div>
<div class="t" style="top:756.40px;font-size:11.5px;color:#252525;line-height:13.22px;left:528px;">San Fernando Va...</div>
<div class="t" style="top:756.40px;font-size:11.5px;color:#252525;line-height:13.22px;left:638px;">CA</div>
<div class="t" style="top:756.40px;font-size:11.5px;color:#4275b8;line-height:13.22px;left:709px;text-decoration:underline;">91604</div>
<div class="t" style="top:756.40px;font-size:11.5px;color:#4275b8;line-height:13.22px;left:780px;text-decoration:underline;">morgank@dx-email.com</div>
<div class="a" style="left:207px;top:790px;width:732px;height:1px;background:#d2d2d2;"></div>
<svg class="a" style="left:226px;top:775px;" width="10" height="13" viewBox="0 0 10 13"><path d="M5 0 C7 0 8.1 1.4 8.1 3.2 C8.1 5.3 6.8 6.9 5 6.9 C3.2 6.9 1.9 5.3 1.9 3.2 C1.9 1.4 3 0 5 0 Z" fill="#4b82ba"/><path d="M0 11.6 C0 8.8 1.3 7.4 3 7 L5 9.2 L7 7 C8.7 7.4 10 8.8 10 11.6 Q10 13 8.8 13 L1.2 13 Q0 13 0 11.6 Z" fill="#4b82ba"/></svg>
<div class="t" style="top:775.40px;font-size:11.5px;color:#252525;line-height:13.22px;left:260px;">Taylor Riley</div>
<div class="t" style="top:775.40px;font-size:11.5px;color:#252525;line-height:13.22px;left:390px;">7776 Torreyson Dr</div>
<div class="t" style="top:775.40px;font-size:11.5px;color:#252525;line-height:13.22px;left:528px;">West Hollywood</div>
<div class="t" style="top:775.40px;font-size:11.5px;color:#252525;line-height:13.22px;left:638px;">CA</div>
<div class="t" style="top:775.40px;font-size:11.5px;color:#4275b8;line-height:13.22px;left:709px;text-decoration:underline;">90046</div>
<div class="t" style="top:775.40px;font-size:11.5px;color:#4275b8;line-height:13.22px;left:780px;text-decoration:underline;">taylorr@dx-email.com</div>
<div class="a" style="left:207px;top:809px;width:732px;height:1px;background:#d2d2d2;"></div>
<svg class="a" style="left:226px;top:794px;" width="10" height="13" viewBox="0 0 10 13"><path d="M5 0 C7 0 8.1 1.4 8.1 3.2 C8.1 5.3 6.8 6.9 5 6.9 C3.2 6.9 1.9 5.3 1.9 3.2 C1.9 1.4 3 0 5 0 Z" fill="#666666"/><path d="M0 11.6 C0 8.8 1.3 7.4 3 7 L5 10 L7 7 C8.7 7.4 10 8.8 10 11.6 Q10 13 8.8 13 L1.2 13 Q0 13 0 11.6 Z" fill="#666666"/></svg>
<div class="t" style="top:794.40px;font-size:11.5px;color:#252525;line-height:13.22px;left:260px;">Violet Bailey</div>
<div class="t" style="top:794.40px;font-size:11.5px;color:#252525;line-height:13.22px;left:390px;">1418 Descanso Dr</div>
<div class="t" style="top:794.40px;font-size:11.5px;color:#252525;line-height:13.22px;left:528px;">La Canada</div>
<div class="t" style="top:794.40px;font-size:11.5px;color:#252525;line-height:13.22px;left:638px;">CA</div>
<div class="t" style="top:794.40px;font-size:11.5px;color:#4275b8;line-height:13.22px;left:709px;text-decoration:underline;">91011</div>
<div class="t" style="top:794.40px;font-size:11.5px;color:#4275b8;line-height:13.22px;left:780px;text-decoration:underline;">violetb@dx-email.com</div>
<div class="a" style="left:207px;top:828px;width:732px;height:1px;background:#d2d2d2;"></div>
<svg class="a" style="left:226px;top:813px;" width="10" height="13" viewBox="0 0 10 13"><path d="M5 0 C7 0 8.1 1.4 8.1 3.2 C8.1 5.3 6.8 6.9 5 6.9 C3.2 6.9 1.9 5.3 1.9 3.2 C1.9 1.4 3 0 5 0 Z" fill="#4b82ba"/><path d="M0 11.6 C0 8.8 1.3 7.4 3 7 L5 9.2 L7 7 C8.7 7.4 10 8.8 10 11.6 Q10 13 8.8 13 L1.2 13 Q0 13 0 11.6 Z" fill="#4b82ba"/></svg>
<div class="t" style="top:813.40px;font-size:11.5px;color:#252525;line-height:13.22px;left:260px;">Wally Hobbs</div>
<div class="t" style="top:813.40px;font-size:11.5px;color:#252525;line-height:13.22px;left:390px;">10385 Shadow Oak Dr</div>
<div class="t" style="top:813.40px;font-size:11.5px;color:#252525;line-height:13.22px;left:528px;">Chatsworth</div>
<div class="t" style="top:813.40px;font-size:11.5px;color:#252525;line-height:13.22px;left:638px;">CA</div>
<div class="t" style="top:813.40px;font-size:11.5px;color:#4275b8;line-height:13.22px;left:709px;text-decoration:underline;">91311</div>
<div class="t" style="top:813.40px;font-size:11.5px;color:#4275b8;line-height:13.22px;left:780px;text-decoration:underline;">wallyh@dx-email.com</div>
<div class="a" style="left:207px;top:829px;width:732px;height:31px;background:#f0f0f0;"></div>
<div class="a" style="left:207px;top:860px;width:732px;height:1px;background:#d4d4d4;"></div>
<svg class="a" style="left:215px;top:843.0px;" width="9" height="6" viewBox="0 0 9 6"><path d="M0 0.4 L4.3 3 L8.6 0.4 L8.6 1.9 L4.3 4.9 L0 1.9 Z" fill="#1f5fa8"/></svg>
<div class="t" style="top:838.86px;font-size:11px;color:#1f64b0;line-height:12.65px;font-weight:bold;left:231px;">Management (Count=4)</div>
<div class="a" style="left:207px;top:879px;width:732px;height:1px;background:#d2d2d2;"></div>
<svg class="a" style="left:226px;top:864px;" width="10" height="13" viewBox="0 0 10 13"><path d="M5 0 C7 0 8.1 1.4 8.1 3.2 C8.1 5.3 6.8 6.9 5 6.9 C3.2 6.9 1.9 5.3 1.9 3.2 C1.9 1.4 3 0 5 0 Z" fill="#4b82ba"/><path d="M0 11.6 C0 8.8 1.3 7.4 3 7 L5 9.2 L7 7 C8.7 7.4 10 8.8 10 11.6 Q10 13 8.8 13 L1.2 13 Q0 13 0 11.6 Z" fill="#4b82ba"/></svg>
<div class="t" style="top:864.40px;font-size:11.5px;color:#252525;line-height:13.22px;left:260px;">Arthur Miller</div>
<div class="t" style="top:864.40px;font-size:11.5px;color:#252525;line-height:13.22px;left:390px;">3800 Homer St.</div>
<div class="t" style="top:864.40px;font-size:11.5px;color:#252525;line-height:13.22px;left:528px;">Los Angeles</div>
<div class="t" style="top:864.40px;font-size:11.5px;color:#252525;line-height:13.22px;left:638px;">CA</div>
<div class="t" style="top:864.40px;font-size:11.5px;color:#4275b8;line-height:13.22px;left:709px;text-decoration:underline;">90031</div>
<div class="t" style="top:864.40px;font-size:11.5px;color:#4275b8;line-height:13.22px;left:780px;text-decoration:underline;">arthurm@dx-email.com</div>
<div class="a" style="left:207px;top:898px;width:732px;height:1px;background:#d2d2d2;"></div>
<svg class="a" style="left:226px;top:883px;" width="10" height="13" viewBox="0 0 10 13"><path d="M5 0 C7 0 8.1 1.4 8.1 3.2 C8.1 5.3 6.8 6.9 5 6.9 C3.2 6.9 1.9 5.3 1.9 3.2 C1.9 1.4 3 0 5 0 Z" fill="#4b82ba"/><path d="M0 11.6 C0 8.8 1.3 7.4 3 7 L5 9.2 L7 7 C8.7 7.4 10 8.8 10 11.6 Q10 13 8.8 13 L1.2 13 Q0 13 0 11.6 Z" fill="#4b82ba"/></svg>
<div class="t" style="top:883.40px;font-size:11.5px;color:#252525;line-height:13.22px;left:260px;">John Heart</div>
<div class="t" style="top:883.40px;font-size:11.5px;color:#252525;line-height:13.22px;left:390px;">351 S Hill St.</div>
<div class="t" style="top:883.40px;font-size:11.5px;color:#252525;line-height:13.22px;left:528px;">Los Angeles</div>
<div class="t" style="top:883.40px;font-size:11.5px;color:#252525;line-height:13.22px;left:638px;">CA</div>
<div class="t" style="top:883.40px;font-size:11.5px;color:#4275b8;line-height:13.22px;left:709px;text-decoration:underline;">90013</div>
<div class="t" style="top:883.40px;font-size:11.5px;color:#4275b8;line-height:13.22px;left:780px;text-decoration:underline;">jheart@dx-email.com</div>
<svg class="a" style="left:226px;top:902px;" width="10" height="13" viewBox="0 0 10 13"><path d="M5 0 C7 0 8.1 1.4 8.1 3.2 C8.1 5.3 6.8 6.9 5 6.9 C3.2 6.9 1.9 5.3 1.9 3.2 C1.9 1.4 3 0 5 0 Z" fill="#4b82ba"/><path d="M0 11.6 C0 8.8 1.3 7.4 3 7 L5 9.2 L7 7 C8.7 7.4 10 8.8 10 11.6 Q10 13 8.8 13 L1.2 13 Q0 13 0 11.6 Z" fill="#4b82ba"/></svg>
<div class="t" style="top:902.40px;font-size:11.5px;color:#252525;line-height:13.22px;left:260px;">Robert Reagan</div>
<div class="t" style="top:902.40px;font-size:11.5px;color:#252525;line-height:13.22px;left:390px;">4 Westmoreland Pl.</div>
<div class="t" style="top:902.40px;font-size:11.5px;color:#252525;line-height:13.22px;left:528px;">Pasadena</div>
<div class="t" style="top:902.40px;font-size:11.5px;color:#252525;line-height:13.22px;left:638px;">CA</div>
<div class="t" style="top:902.40px;font-size:11.5px;color:#4275b8;line-height:13.22px;left:709px;text-decoration:underline;">91103</div>
<div class="t" style="top:902.40px;font-size:11.5px;color:#4275b8;line-height:13.22px;left:780px;text-decoration:underline;">robertr@dx-email.com</div>
<div class="a" style="left:954px;top:176px;width:130px;height:130px;background:#fff;border:1px solid #d0d0d0"></div>
<svg class="a" style="left:955px;top:177px;" width="128" height="128" viewBox="0 0 128 128"><g transform="translate(-1,-1)"><defs><linearGradient id="sk" x1="0" x2="1"><stop offset="0" stop-color="#e0a07c"/><stop offset="0.5" stop-color="#efbb9a"/><stop offset="1" stop-color="#d99874"/></linearGradient><linearGradient id="sh" x1="0" x2="1"><stop offset="0" stop-color="#a3b6bf"/><stop offset="0.45" stop-color="#b2c3ca"/><stop offset="1" stop-color="#9cb0ba"/></linearGradient><linearGradient id="ar" x1="0" y1="0" x2="0" y2="1"><stop offset="0" stop-color="#e9ac88"/><stop offset="1" stop-color="#dc9a74"/></linearGradient></defs><path d="M43.6 54.8 C36 57 26 61 20.4 65.2 C17 69 16.5 72 17.6 75.6 C17 85 18.5 95 21.2 101.2 L45.2 93.2 L46 105 L62 105 L90 109 L87.6 94.8 L105.6 92.4 C103 80 99 70 94 65.2 C88 61 78 57 70.8 55.6 C68 63 64 67.2 59.6 67.2 C52 67.2 46 62 43.6 54.8 Z" fill="url(#sh)"/><path d="M30 70 C45 80 60 95 68 104" fill="none" stroke="#98abb4" stroke-width="1.2"/><path d="M45 43 L71 43 L70.8 55.6 C68 63 64 67.2 59.6 67.2 C52 67.2 46 62 43.6 54.8 Z" fill="#dc9c78"/><ellipse cx="43.6" cy="33" rx="2.6" ry="4.8" fill="#df9f7b"/><ellipse cx="74.6" cy="33" rx="2.6" ry="4.8" fill="#df9f7b"/><rect x="43" y="14" width="33" height="19" fill="#e8ad8a"/><path d="M44 22 C44 12 50 9 59.5 9 C69 9 75 12 75 22 C75 34 72.5 44 66.5 50 C63.5 53 61.5 54 59.5 54 C57.5 54 54.5 53 51.5 50 C45.5 44 44 34 44 22 Z" fill="url(#sk)"/><path d="M42 31 C39 16 44 4 58.5 3 C72.5 3 79 12 76.5 31 C75.5 24 73.5 19 70.5 17 C63.5 14.5 54.5 14.5 47.5 17 C44.5 19 43 24 42 31 Z" fill="#9b6a48"/><path d="M46 11 L49.5 5 L54 8 L58.5 2.5 L63 6.5 L68 3.5 L70.5 8.5 L75 8 L72.5 14 L47 14.5 Z" fill="#9b6a48"/><path d="M52 40.5 C55.5 44.5 62.5 44.5 66.5 40.5 Z" fill="#fff"/><path d="M50.5 29 H55.5 M62 29 H67" stroke="#7a5544" stroke-width="1.3"/><path d="M21.2 101.2 L45.2 93.2 C46.5 98 46 103 46 105.2 L66 105.2 C72 104 76 102 80.4 102 C84 102 86.5 102.5 87.6 103 L87.6 94.8 L105.6 92.4 C108 98 109.5 104 109.5 110 C110 116 110 122 108.4 128 L36.4 128 C31 120 25 110 21.2 101.2 Z" fill="url(#ar)"/><path d="M46 105.5 C41 111 39 118 41 127" fill="none" stroke="#c9855f" stroke-width="1"/><path d="M90 109 C80 115 70 121 62 127.5" fill="none" stroke="#c37e59" stroke-width="1.2"/><ellipse cx="83" cy="106" rx="5" ry="3.5" fill="#eeb896"/><path d="M31 121 L36 128 L32 128 Z" fill="#556"/></g></svg>
<div class="t" style="top:196.64px;font-size:26px;color:#262626;line-height:29.90px;left:1098px;">Bart Arnaz</div>
<div class="t" style="top:233.76px;font-size:19.25px;color:#262626;line-height:22.14px;left:1098px;">Director of Engineering</div>
<svg class="a" style="left:1098px;top:260px;" width="28" height="28" viewBox="0 0 28 28"><circle cx="14" cy="14" r="12.8" fill="none" stroke="#262626" stroke-width="2"/></svg>
<svg class="a" style="left:1136px;top:260px;" width="28" height="28" viewBox="0 0 28 28"><circle cx="14" cy="14" r="12.8" fill="none" stroke="#262626" stroke-width="2"/></svg>
<svg class="a" style="left:1174px;top:260px;" width="28" height="28" viewBox="0 0 28 28"><circle cx="14" cy="14" r="12.8" fill="none" stroke="#262626" stroke-width="2"/></svg>
<svg class="a" style="left:1212px;top:260px;" width="28" height="28" viewBox="0 0 28 28"><circle cx="14" cy="14" r="12.8" fill="none" stroke="#262626" stroke-width="2"/></svg>
<svg class="a" style="left:1100px;top:264px;" width="24" height="20" viewBox="0 0 24 20"><g transform="translate(-1100,-264)"><path d="M1106 269 H1118 V278 H1115 L1112.3 281 L1112 278 H1106 Z" fill="#262626"/></g></svg>
<svg class="a" style="left:1140px;top:264px;" width="20" height="20" viewBox="0 0 20 20"><g transform="translate(-1140,-264)"><path d="M1148.6 269 L1146.4 271.2 L1152.8 277.6 L1155 275.4" fill="none" stroke="#262626" stroke-width="3" stroke-linejoin="round"/><path d="M1147.8 267.9 L1150 270.1 L1148.6 271.5 L1146.4 269.3 Z M1154.2 274.2 L1156.1 276.1 L1154.6 277.6 L1152.7 275.7 Z" fill="#262626"/></g></svg>
<svg class="a" style="left:1178px;top:264px;" width="20" height="20" viewBox="0 0 20 20"><g transform="translate(-1178,-264)"><rect x="1182.2" y="270.1" width="8.7" height="7.6" fill="#262626"/><path d="M1190.5 273.9 L1193.8 270.8 V277 Z" fill="#262626"/></g></svg>
<svg class="a" style="left:1216px;top:264px;" width="20" height="20" viewBox="0 0 20 20"><g transform="translate(-1216,-264)"><rect x="1219.8" y="269" width="12.2" height="8.7" fill="#262626"/><path d="M1220.2 269.4 L1225.9 275 L1231.6 269.4" fill="none" stroke="#f0f0f0" stroke-width="0.9"/></g></svg>
<div class="a" style="left:954px;top:322px;width:471px;height:1px;background:#a8a8a8;"></div>
<div class="t" style="top:335.12px;font-size:14.3px;color:#3a3a3a;line-height:16.45px;right:78px;transform:scaleX(0.905);transform-origin:100% 50%;">EVALUATIONS</div>
<div class="t" style="top:334.60px;font-size:14px;color:#444;line-height:16.10px;left:1071.5px;width:600px;text-align:center;">|</div>
<div class="t" style="top:335.12px;font-size:14.3px;color:#21509f;line-height:16.45px;font-weight:bold;right:16px;transform:scaleX(0.89);transform-origin:100% 50%;">TASKS</div>
<div class="a" style="left:954px;top:354px;width:471px;height:567px;background:#fff;border:1px solid #a8a8a8"></div>
<div class="t" style="top:371.95px;font-size:18.5px;color:#262626;line-height:21.27px;left:973px;">Create 2013 R&amp;D Plans</div>
<div class="t" style="top:371.08px;font-size:8.6px;color:#858585;line-height:9.89px;font-weight:bold;right:62px;">DUE DATE</div>
<div class="t" style="top:383.86px;font-size:11px;color:#262626;line-height:12.65px;font-weight:bold;right:62px;">07 Mar 2013</div>
<svg class="a" style="left:1383px;top:370px;" width="27" height="24" viewBox="0 0 27 24"><g transform="translate(-1383,-370)"><path d="M1386.8 373.8 L1396.7 374.2 L1398.2 377.6 L1405.3 377.4 L1397.3 381.8 L1396.3 378.9 L1390.5 382.2 Z" fill="#6d6d6d"/><path d="M1387.3 373.6 L1392 391.6" stroke="#6d6d6d" stroke-width="1.7"/></g></svg>
<div class="t" style="top:403.40px;font-size:11.5px;color:#262626;line-height:13.22px;left:973px;">Create 2013 R&amp;D Plan Report for CEO and include information</div>
<div class="t" style="top:416.20px;font-size:11.5px;color:#262626;line-height:13.22px;left:973px;">on products under consideration and final decisions as to</div>
<div class="t" style="top:429.00px;font-size:11.5px;color:#262626;line-height:13.22px;left:973px;">which products will be depracated.</div>
<div class="t" style="top:441.80px;font-size:11.5px;color:#262626;line-height:13.22px;left:973px;">Bart Arnaz: Done. You should review this Arthur as there are</div>
<div class="t" style="top:435.58px;font-size:30.3px;color:#3f67df;line-height:34.84px;right:34px;transform:scaleX(0.93);transform-origin:100% 50%;">100%</div>
<div class="a" style="left:973px;top:471px;width:433px;height:6px;background:#d2d2d2;"></div>
<div class="a" style="left:973px;top:471px;width:433px;height:6px;background:#3f67df;"></div>
<div class="a" style="left:955px;top:493px;width:469px;height:1px;background:#d8d8d8;"></div>
<div class="t" style="top:510.95px;font-size:18.5px;color:#262626;line-height:21.27px;left:973px;">Prepare Product Recall Report</div>
<div class="t" style="top:510.08px;font-size:8.6px;color:#858585;line-height:9.89px;font-weight:bold;right:62px;">DUE DATE</div>
<div class="t" style="top:522.86px;font-size:11px;color:#262626;line-height:12.65px;font-weight:bold;right:62px;">16 May 2013</div>
<svg class="a" style="left:1383px;top:509px;" width="27" height="24" viewBox="0 0 27 24"><g transform="translate(-1383,-509)"><path d="M1386.8 512.8 L1396.7 513.2 L1398.2 516.6 L1405.3 516.4 L1397.3 520.8 L1396.3 517.9 L1390.5 521.2 Z" fill="#6d6d6d"/><path d="M1387.3 512.6 L1392 530.6" stroke="#6d6d6d" stroke-width="1.7"/></g></svg>
<div class="t" style="top:542.40px;font-size:11.5px;color:#262626;line-height:13.22px;left:973px;">Bart, this recall was an absolute disaster. Your report better be</div>
<div class="t" style="top:555.20px;font-size:11.5px;color:#262626;line-height:13.22px;left:973px;">on my desk tomorrow. This is killing our bottom-line.</div>
<div class="t" style="top:568.00px;font-size:11.5px;color:#262626;line-height:13.22px;left:973px;">Bart Arnaz: Yes, it&#x27;s unacceptable.</div>
<div class="t" style="top:574.58px;font-size:30.3px;color:#3f67df;line-height:34.84px;right:34px;transform:scaleX(0.93);transform-origin:100% 50%;">100%</div>
<div class="a" style="left:973px;top:610px;width:433px;height:6px;background:#d2d2d2;"></div>
<div class="a" style="left:973px;top:610px;width:433px;height:6px;background:#3f67df;"></div>
<div class="a" style="left:955px;top:632px;width:469px;height:1px;background:#d8d8d8;"></div>
<div class="t" style="top:649.95px;font-size:18.5px;color:#262626;line-height:21.27px;left:973px;">Review New HDMI Specification</div>
<div class="t" style="top:649.08px;font-size:8.6px;color:#858585;line-height:9.89px;font-weight:bold;right:62px;">DUE DATE</div>
<div class="t" style="top:661.86px;font-size:11px;color:#262626;line-height:12.65px;font-weight:bold;right:62px;">31 Jan 2014</div>
<svg class="a" style="left:1383px;top:648px;" width="27" height="24" viewBox="0 0 27 24"><g transform="translate(-1383,-648)"><path d="M1386.8 651.8 L1396.7 652.2 L1398.2 655.6 L1405.3 655.4 L1397.3 659.8 L1396.3 656.9 L1390.5 660.2 Z" fill="#6d6d6d"/><path d="M1387.3 651.6 L1392 669.6" stroke="#6d6d6d" stroke-width="1.7"/></g></svg>
<div class="t" style="top:681.40px;font-size:11.5px;color:#262626;line-height:13.22px;left:973px;">Bart, this is already delayed too long. I need your report on the</div>
<div class="t" style="top:694.20px;font-size:11.5px;color:#262626;line-height:13.22px;left:973px;">new HDMI specification and how we plan on getting to market.</div>
<div class="t" style="top:707.00px;font-size:11.5px;color:#262626;line-height:13.22px;left:973px;">Bart Arnaz: I understand and I&#x27;m working on it. Getting input</div>
<div class="t" style="top:719.80px;font-size:11.5px;color:#262626;line-height:13.22px;left:973px;">from Industry types.</div>
<div class="t" style="top:713.58px;font-size:30.3px;color:#3f67df;line-height:34.84px;right:34px;transform:scaleX(0.93);transform-origin:100% 50%;">50%</div>
<div class="a" style="left:973px;top:749px;width:433px;height:6px;background:#d2d2d2;"></div>
<div class="a" style="left:973px;top:749px;width:216px;height:6px;background:#3f67df;"></div>
<div class="a" style="left:955px;top:771px;width:469px;height:1px;background:#d8d8d8;"></div>
<div class="t" style="top:788.95px;font-size:18.5px;color:#262626;line-height:21.27px;left:973px;">Report on the State of Engineeri...</div>
<div class="t" style="top:788.08px;font-size:8.6px;color:#858585;line-height:9.89px;font-weight:bold;right:62px;">DUE DATE</div>
<div class="t" style="top:800.86px;font-size:11px;color:#262626;line-height:12.65px;font-weight:bold;right:62px;">19 Mar 2014</div>
<svg class="a" style="left:1383px;top:787px;" width="27" height="24" viewBox="0 0 27 24"><g transform="translate(-1383,-787)"><path d="M1386.8 790.8 L1396.7 791.2 L1398.2 794.6 L1405.3 794.4 L1397.3 798.8 L1396.3 795.9 L1390.5 799.2 Z" fill="#6d6d6d"/><path d="M1387.3 790.6 L1392 808.6" stroke="#6d6d6d" stroke-width="1.7"/></g></svg>
<div class="t" style="top:820.40px;font-size:11.5px;color:#262626;line-height:13.22px;left:973px;">Under a lot of pressure from CEO to figure out cause of</div>
<div class="t" style="top:833.20px;font-size:11.5px;color:#262626;line-height:13.22px;left:973px;">refunds. Need you to send me a state of engineering dept</div>
<div class="t" style="top:846.00px;font-size:11.5px;color:#262626;line-height:13.22px;left:973px;">report so we can get to the bottom of the problems.</div>
<div class="t" style="top:852.58px;font-size:30.3px;color:#3f67df;line-height:34.84px;right:34px;transform:scaleX(0.93);transform-origin:100% 50%;">0%</div>
<div class="a" style="left:973px;top:888px;width:433px;height:6px;background:#d2d2d2;"></div>
<div class="t" style="top:944.78px;font-size:17.6px;color:#3f80c2;line-height:20.24px;left:10px;transform:scaleX(0.915);transform-origin:0 50%;">Employees</div>
<div class="t" style="top:944.78px;font-size:17.6px;color:#505050;line-height:20.24px;left:109px;transform:scaleX(0.927);transform-origin:0 50%;">Customers</div>
<div class="t" style="top:944.78px;font-size:17.6px;color:#505050;line-height:20.24px;left:207px;transform:scaleX(0.951);transform-origin:0 50%;">Products</div>
<div class="t" style="top:944.78px;font-size:17.6px;color:#505050;line-height:20.24px;left:291px;transform:scaleX(0.87);transform-origin:0 50%;">Sales</div>
<div class="t" style="top:944.78px;font-size:17.6px;color:#505050;line-height:20.24px;left:347px;transform:scaleX(0.97);transform-origin:0 50%;">Opportunities</div>
<div class="a" style="left:477.0px;top:951.5px;width:5px;height:5px;background:#333;border-radius:2.5px;"></div>
<div class="a" style="left:487.0px;top:951.5px;width:5px;height:5px;background:#333;border-radius:2.5px;"></div>
<div class="a" style="left:497.0px;top:951.5px;width:5px;height:5px;background:#333;border-radius:2.5px;"></div>
<div class="a" style="left:0px;top:974px;width:1440px;height:26px;background:#106ebe;"></div>
<div class="t" style="top:981.78px;font-size:10px;color:#fff;line-height:11.50px;font-weight:bold;left:7px;">RECORDS: 51</div>
<div class="a" style="left:1363px;top:974px;width:29px;height:26px;background:#3a86cc;"></div>
<svg class="a" style="left:1368px;top:976px;" width="52" height="22" viewBox="0 0 52 22"><g transform="translate(-1368,-976)"><rect x="1371.6" y="981.6" width="12.8" height="10.8" fill="none" stroke="#fff" stroke-width="1.2"/><rect x="1371" y="981" width="5" height="12" fill="#fff"/><rect x="1401.6" y="981.6" width="12.8" height="10.8" fill="none" stroke="#fff" stroke-width="1.2"/><path d="M1408 981 V993" stroke="#fff" stroke-width="1"/><path d="M1403 984.2 H1406.6 M1403 986.5 H1406.6 M1403 988.8 H1406.6 M1403 991 H1406.6 M1409.4 984.2 H1413 M1409.4 986.5 H1413 M1409.4 988.8 H1413 M1409.4 991 H1413" stroke="#e0ecf8" stroke-width="0.9"/></g></svg>
<div class="a" style="left:1434px;top:986px;width:2px;height:2px;background:#b8c0c8;"></div>
<div class="a" style="left:1430px;top:990px;width:2px;height:2px;background:#b8c0c8;"></div>
<div class="a" style="left:1434px;top:990px;width:2px;height:2px;background:#b8c0c8;"></div>
<div class="a" style="left:1426px;top:994px;width:2px;height:2px;background:#b8c0c8;"></div>
<div class="a" style="left:1430px;top:994px;width:2px;height:2px;background:#b8c0c8;"></div>
<div class="a" style="left:1434px;top:994px;width:2px;height:2px;background:#b8c0c8;"></div>
</body></html>
